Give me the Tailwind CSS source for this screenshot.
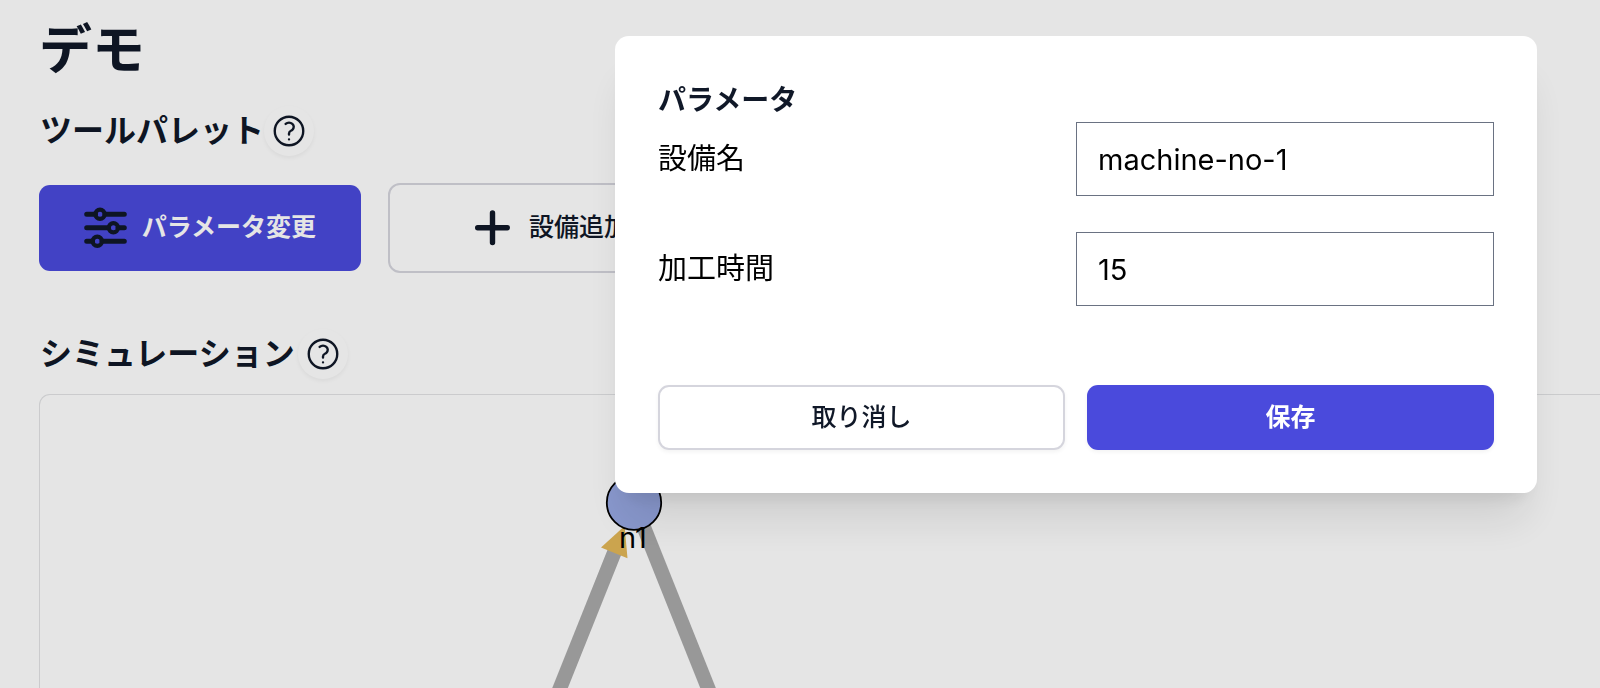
<!DOCTYPE html>
<html lang="ja">
<head>
<meta charset="utf-8">
<meta name="viewport" content="width=device-width, initial-scale=1">
<title>デモ</title>
<script src="https://cdn.jsdelivr.net/npm/@tailwindcss/browser@4"></script>
</head>
<body class="bg-white font-['Inter','Noto_Sans_CJK_JP',sans-serif] text-gray-900">
<main class="flex h-screen min-h-[600px] flex-col overflow-hidden pl-[39px] pt-[18px]">
  <h1 class="text-[53px] font-bold leading-[64px]">デモ</h1>

  <div class="mt-6 flex shrink-0 items-center pl-px">
    <h2 class="text-[32px] font-semibold leading-[50px]">ツールパレット</h2>
    <button type="button" aria-label="ツールパレットのヘルプ" class="flex size-[50px] items-center justify-center rounded-full shadow-[0_2px_4px_rgba(0,0,0,0.05)]">
      <svg class="size-[38px]" viewBox="0 0 24 24" fill="none" stroke="currentColor" stroke-width="1.5" stroke-linecap="round" stroke-linejoin="round" aria-hidden="true"><path d="M9.879 7.519c1.171-1.025 3.071-1.025 4.242 0 1.172 1.025 1.172 2.687 0 3.712-.203.179-.43.326-.67.442-.745.361-1.45.999-1.45 1.827v.75M21 12a9 9 0 1 1-18 0 9 9 0 0 1 18 0Zm-9 5.25h.008v.008H12v-.008Z"/></svg>
    </button>
  </div>

  <div class="mt-[27px] flex shrink-0 items-center gap-[27px]">
    <button type="button" class="flex h-[86px] w-[322px] items-center justify-center gap-[15px] rounded-[11px] bg-[#4a4adc] text-[25px] font-semibold text-white">
      <svg class="size-[43px] text-gray-900" viewBox="0 0 43 43" fill="none" stroke="currentColor" stroke-width="5" stroke-linecap="round" aria-hidden="true"><path d="M2.7 7.2H11.5M21 7.2H40.3M2.7 20.7H24.5M34 20.7H40.3M2.7 34.2H8.5M18 34.2H40.3"/><g stroke-width="4.2"><circle cx="16" cy="7.2" r="4.6"/><circle cx="29.4" cy="20.7" r="4.6"/><circle cx="13.3" cy="34.2" r="4.6"/></g></svg>
      パラメータ変更
    </button>
    <button type="button" class="flex h-[90px] w-[324px] items-center justify-center gap-[15px] rounded-[12px] border-2 border-[#d5d5dd] text-[25px] font-medium">
      <svg class="size-[43px]" viewBox="0 0 43 43" fill="none" stroke="currentColor" stroke-width="5.4" stroke-linecap="round" aria-hidden="true"><path d="M21.5 5.9v29.6M6.7 20.7h29.6"/></svg>
      設備追加
    </button>
  </div>

  <div class="mt-14 flex shrink-0 items-center gap-[3px] pl-px">
    <h2 class="text-[32px] font-semibold leading-[50px]">シミュレーション</h2>
    <button type="button" aria-label="シミュレーションのヘルプ" class="flex size-[50px] items-center justify-center rounded-full shadow-[0_2px_4px_rgba(0,0,0,0.05)]">
      <svg class="size-[38px]" viewBox="0 0 24 24" fill="none" stroke="currentColor" stroke-width="1.5" stroke-linecap="round" stroke-linejoin="round" aria-hidden="true"><path d="M9.879 7.519c1.171-1.025 3.071-1.025 4.242 0 1.172 1.025 1.172 2.687 0 3.712-.203.179-.43.326-.67.442-.745.361-1.45.999-1.45 1.827v.75M21 12a9 9 0 1 1-18 0 9 9 0 0 1 18 0Zm-9 5.25h.008v.008H12v-.008Z"/></svg>
    </button>
  </div>

  <section aria-label="シミュレーション" class="mt-[15px] min-h-0 flex-1 overflow-hidden rounded-tl-[11px] border-l border-t border-[#e2e3e5]">
    <!-- Node graph -->
    <svg width="1000" height="600" viewBox="40 395 1000 600" aria-hidden="true">
      <g stroke="#aaa" stroke-width="14.5"><path d="M514 803L614.5 552"/><path d="M634 502.7L754 803"/></g>
      <path d="M601 547.5L627.5 558.3L624.6 526Z" fill="#e2b757"/>
      <circle cx="634" cy="502.7" r="27.2" fill="#98a9e4" stroke="#000" stroke-width="1.8"/>
      <text x="619" y="548" font-size="29" fill="#000">n1</text>
    </svg>
  </section>
</main>

<div class="fixed inset-0 flex items-start justify-end bg-black/10 pl-8 pr-[63px] pt-9">
  <form role="dialog" aria-modal="true" aria-labelledby="dialog-title" class="w-full max-w-[922px] rounded-[14px] bg-white p-[43px] shadow-[0_36px_45px_-9px_rgba(0,0,0,0.1),0_14px_18px_-11px_rgba(0,0,0,0.1)]">
    <h3 id="dialog-title" class="text-[28px] font-semibold leading-[43px]">パラメータ</h3>
    <div class="grid grid-cols-2 items-center gap-y-9 text-[29px] text-black">
      <label for="machine-name">設備名</label>
      <input id="machine-name" type="text" value="machine-no-1" class="h-[74px] w-full min-w-0 border border-gray-500 px-[21px]">
      <label for="process-time">加工時間</label>
      <input id="process-time" type="text" inputmode="numeric" value="15" class="h-[74px] w-full min-w-0 border border-gray-500 px-[21px]">
    </div>
    <div class="mt-[79px] grid grid-cols-2 gap-[22px] text-[25px]">
      <button type="button" class="h-[65px] rounded-[11px] border-2 border-[#d5d5dd] font-medium shadow-[0_2px_4px_rgba(0,0,0,0.05)]">取り消し</button>
      <button type="submit" class="h-[65px] rounded-[11px] bg-[#4a4adc] font-semibold text-white shadow-[0_2px_4px_rgba(0,0,0,0.05)]">保存</button>
    </div>
  </form>
</div>
</body>
</html>
